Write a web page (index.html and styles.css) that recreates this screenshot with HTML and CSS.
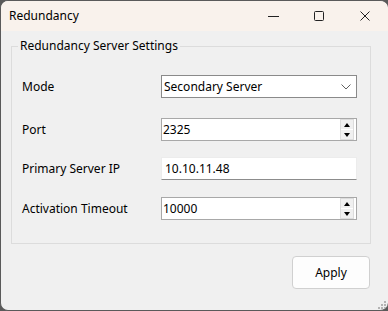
FILE: index.html
```html
<!DOCTYPE html>
<html lang="en">
<head>
    <meta charset="UTF-8">
    <meta name="viewport" content="width=device-width, initial-scale=1.0">
    <title>Redundancy</title>
    <link rel="stylesheet" href="styles.css">
</head>
<body>
    <div class="window">
        <div class="titlebar">
            <span class="title">Redundancy</span>
            <div class="caption-buttons">
                <span class="caption-btn">
                    <svg width="11" height="10" viewBox="0 0 11 10"><line x1="0" y1="5.5" x2="11" y2="5.5" stroke="#222" stroke-width="1"/></svg>
                </span>
                <span class="caption-btn">
                    <svg width="10" height="10" viewBox="0 0 10 10"><rect x="0.5" y="0.5" width="9" height="9" rx="1" fill="none" stroke="#222" stroke-width="1"/></svg>
                </span>
                <span class="caption-btn">
                    <svg width="10" height="10" viewBox="0 0 10 10"><path d="M0.5 0.5 L9.5 9.5 M9.5 0.5 L0.5 9.5" stroke="#222" stroke-width="1"/></svg>
                </span>
            </div>
        </div>

        <div class="content">
            <fieldset class="group">
                <legend>Redundancy Server Settings</legend>

                <div class="row row-mode">
                    <label>Mode</label>
                    <div class="combo">
                        <span>Secondary Server</span>
                        <svg width="10" height="6" viewBox="0 0 10 6"><polyline points="0.5,0.5 5,5 9.5,0.5" fill="none" stroke="#606060" stroke-width="1"/></svg>
                    </div>
                </div>

                <div class="row row-port">
                    <label>Port</label>
                    <div class="spin">
                        <span>2325</span>
                        <div class="spin-buttons">
                            <span class="spin-btn"><i class="arrow-up"></i></span>
                            <span class="spin-btn"><i class="arrow-down"></i></span>
                        </div>
                    </div>
                </div>

                <div class="row">
                    <label>Primary Server IP</label>
                    <div class="textbox">10.10.11.48</div>
                </div>

                <div class="row">
                    <label>Activation Timeout</label>
                    <div class="spin">
                        <span>10000</span>
                        <div class="spin-buttons">
                            <span class="spin-btn"><i class="arrow-up"></i></span>
                            <span class="spin-btn"><i class="arrow-down"></i></span>
                        </div>
                    </div>
                </div>
            </fieldset>

            <div class="actions">
                <button>Apply</button>
            </div>

            <div class="grip">
                <i></i><i></i><i></i><i></i><i></i><i></i>
            </div>
        </div>
    </div>
</body>
</html>
```

FILE: styles.css
```css
body {
    margin: 0;
    background-color: #5a5a5a;
    font-family: "Noto Sans", sans-serif;
    font-size: 12px;
    color: #000;
}

.window {
    position: relative;
    width: 387px;
    height: 309px;
    border: 1px solid #5a5a5a;
    border-right: none;
    border-radius: 8px;
    overflow: hidden;
    background-color: #f0f0f0;
}

.titlebar {
    display: flex;
    justify-content: space-between;
    align-items: center;
    height: 30px;
    background-color: #f9f2ec;
}

.title {
    padding-left: 8px;
    padding-bottom: 1px;
}

.caption-buttons {
    display: flex;
    height: 100%;
}

.caption-btn {
    display: flex;
    align-items: center;
    justify-content: center;
    width: 46px;
    height: 100%;
}

.content {
    padding-top: 7px;
}

.group {
    margin: 0 17px 0 10px;
    padding: 21px 12px 23px 10px;
    border: 1px solid #dcdcdc;
    min-width: 0;
}

.group legend {
    margin-left: -4px;
    padding: 0 2px;
    line-height: 16px;
}

.row {
    display: grid;
    grid-template-columns: 139px 196px;
    align-items: center;
    margin-bottom: 17px;
}

.row-mode {
    margin-bottom: 20px;
}

.row-port {
    margin-bottom: 16px;
}

.row:last-child {
    margin-bottom: 0;
}

.combo,
.spin,
.textbox {
    box-sizing: border-box;
    height: 23px;
    background-color: #fff;
    display: flex;
    align-items: center;
    justify-content: space-between;
}

.combo {
    border: 1px solid #8a8a8a;
    padding: 0 5px 0 2px;
}

.spin {
    border: 1px solid #a8a8a8;
    padding: 0 2px 0 1px;
}

.textbox {
    border: 1px solid #ececec;
    border-bottom-color: #8c8c8c;
    padding-left: 3px;
}

.spin-buttons {
    display: flex;
    flex-direction: column;
    border: 1px solid #dcdcdc;
}

.spin-btn {
    display: flex;
    align-items: center;
    justify-content: center;
    width: 12px;
    height: 9px;
    background-color: #f0f0f0;
}

.spin-btn + .spin-btn {
    border-top: 1px solid #fff;
}

.arrow-up,
.arrow-down {
    width: 0;
    height: 0;
    border-left: 3.5px solid transparent;
    border-right: 3.5px solid transparent;
}

.arrow-up {
    border-bottom: 4px solid #000;
}

.arrow-down {
    border-top: 4px solid #000;
}

.actions {
    display: flex;
    justify-content: flex-end;
    padding: 12px 18px 0 0;
}

button {
    width: 78px;
    height: 33px;
    font-family: inherit;
    font-size: 12px;
    color: #000;
    background-color: #fdfdfd;
    border: 1px solid #d0d0d0;
    border-radius: 4px;
}

.grip {
    position: absolute;
    right: 2px;
    bottom: 1px;
    display: grid;
    grid-template-columns: repeat(3, 2px);
    grid-template-rows: repeat(3, 2px);
    gap: 1px;
}

.grip i {
    background-color: #b4b4b4;
}

.grip i:nth-child(1) { grid-area: 1 / 3; }
.grip i:nth-child(2) { grid-area: 2 / 2; }
.grip i:nth-child(3) { grid-area: 2 / 3; }
.grip i:nth-child(4) { grid-area: 3 / 1; }
.grip i:nth-child(5) { grid-area: 3 / 2; }
.grip i:nth-child(6) { grid-area: 3 / 3; }
```
